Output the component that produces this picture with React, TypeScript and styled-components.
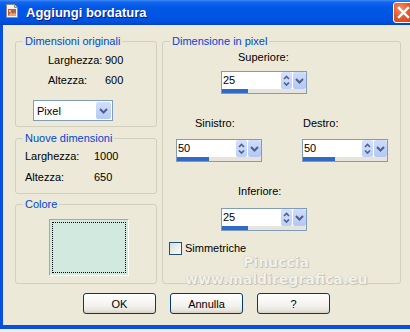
import React from 'react';
import styled, { createGlobalStyle } from 'styled-components';

const GlobalStyle = createGlobalStyle`
  html, body {
    margin: 0;
    padding: 0;
    background: #eeeeea;
  }
  body {
    font-family: "Liberation Sans", Arial, sans-serif;
    font-size: 11px;
    color: #000;
  }
`;

export default function App() {
    return (
        <Screen>
            <GlobalStyle />
            <Window>
                <TitleBar>
                    <AppIcon />
                    <Title>Aggiungi bordatura</Title>
                    <CloseButton>
                        <svg width="13" height="13" viewBox="0 0 13 13">
                            <path d="M2 2 L11 11 M11 2 L2 11" stroke="#fff" strokeWidth="2.4" strokeLinecap="square" />
                        </svg>
                    </CloseButton>
                </TitleBar>
                <Body>
                    <Columns>
                        <LeftColumn>
                            <Group $h={92}>
                                <Caption>Dimensioni originali</Caption>
                                <InfoRow $mt={6} $pl={32} $lw={57}>
                                    <span>Larghezza:</span><span>900</span>
                                </InfoRow>
                                <InfoRow $mt={7} $pl={32} $lw={57}>
                                    <span>Altezza:</span><span>600</span>
                                </InfoRow>
                                <Select>
                                    <SelectText>Pixel</SelectText>
                                    <SelectButton><ChevronDown /></SelectButton>
                                </Select>
                            </Group>
                            <Group $h={62}>
                                <Caption>Nuove dimensioni</Caption>
                                <InfoRow $mt={5} $pl={9} $lw={69}>
                                    <span>Larghezza:</span><span>1000</span>
                                </InfoRow>
                                <InfoRow $mt={8} $pl={9} $lw={69}>
                                    <span>Altezza:</span><span>650</span>
                                </InfoRow>
                            </Group>
                            <Group $h={86}>
                                <Caption>Colore</Caption>
                                <Swatch>
                                    <SwatchFocus />
                                </Swatch>
                            </Group>
                        </LeftColumn>
                        <Group $h={249}>
                            <Caption>Dimensione in pixel</Caption>
                            <FieldLabel $mt={3} $ml={75}>Superiore:</FieldLabel>
                            <Spinner value={25} fill={26} mt={7} ml={58} />
                            <PairRow>
                                <Field>
                                    <FieldLabel $mt={0} $ml={19}>Sinistro:</FieldLabel>
                                    <Spinner value={50} fill={32} mt={9} ml={0} />
                                </Field>
                                <Field>
                                    <FieldLabel $mt={0} $ml={1}>Destro:</FieldLabel>
                                    <Spinner value={50} fill={32} mt={9} ml={0} />
                                </Field>
                            </PairRow>
                            <FieldLabel $mt={23} $ml={75}>Inferiore:</FieldLabel>
                            <Spinner value={25} fill={26} mt={10} ml={58} />
                            <CheckRow>
                                <CheckBox />
                                <span>Simmetriche</span>
                            </CheckRow>
                        </Group>
                    </Columns>
                    <ButtonRow>
                        <PushButton>OK</PushButton>
                        <PushButton>Annulla</PushButton>
                        <PushButton>?</PushButton>
                    </ButtonRow>
                    <Watermark>
                        <div>Pinuccia</div>
                        <div>www.maldiregrafica.eu</div>
                    </Watermark>
                </Body>
            </Window>
        </Screen>
    );
}

function AppIcon() {
    return (
        <IconBox>
            <svg width="16" height="16" viewBox="0 0 16 16">
                <path d="M2.5 1.5 H10.5 L13.5 4.5 V14.5 H2.5 Z" fill="#f2f2f2" stroke="#8a8a8a" />
                <path d="M10.5 1.5 V4.5 H13.5" fill="#d8d8d8" stroke="#8a8a8a" />
                <rect x="4" y="6" width="8" height="7" fill="#b8603f" />
                <path d="M4 13 L7 9 L9 11 L10.5 9.5 L12 11 V13 Z" fill="#e8a07a" />
                <circle cx="6" cy="8" r="1" fill="#f6d2b8" />
            </svg>
        </IconBox>
    );
}

function ChevronDown() {
    return (
        <svg width="9" height="6" viewBox="0 0 9 6">
            <path d="M1 1 L4.5 4.5 L8 1" fill="none" stroke="#4d6185" strokeWidth="2" />
        </svg>
    );
}

function UpDown() {
    return (
        <svg width="9" height="15" viewBox="0 0 9 15">
            <path d="M2 6 L4.5 3.5 L7 6" fill="none" stroke="#4d6185" strokeWidth="1.6" />
            <path d="M2 9.5 L4.5 12 L7 9.5" fill="none" stroke="#4d6185" strokeWidth="1.6" />
        </svg>
    );
}

type SpinnerProps = {
    value: number;
    fill: number;
    mt: number;
    ml: number;
}

function Spinner({ value, fill, mt, ml }: SpinnerProps) {
    return (
        <SpinBox $mt={mt} $ml={ml}>
            <SpinTop>
                <SpinValue>{value}</SpinValue>
                <ArrowButton><UpDown /></ArrowButton>
                <DropButton><ChevronDown /></DropButton>
            </SpinTop>
            <Track>
                <TrackFill style={{ width: fill }} />
            </Track>
        </SpinBox>
    );
}

const Screen = styled.div`
    width: 410px;
    height: 332px;
    overflow: hidden;
    background: #eeeeea;
`

const Window = styled.div`
    width: 416px;
    display: flex;
    flex-direction: column;
`

const TitleBar = styled.div`
    height: 25px;
    box-sizing: border-box;
    display: flex;
    align-items: center;
    padding-left: 4px;
    background: linear-gradient(to bottom, #3e8df7 0%, #1466ee 8%, #0058e6 30%, #0054e3 70%, #0050dc 88%, #0043c4 100%);
`

const IconBox = styled.div`
    width: 16px;
    height: 16px;
    margin-top: -3px;
`

const Title = styled.div`
    margin-left: 6px;
    margin-top: -1px;
    font-family: "Liberation Sans", Arial, sans-serif;
    font-weight: bold;
    font-size: 13px;
    color: #fff;
    text-shadow: 1px 1px 0 #0a1a8a;
`

const CloseButton = styled.div`
    width: 21px;
    height: 21px;
    box-sizing: border-box;
    margin-left: auto;
    margin-right: 2px;
    margin-top: -1px;
    border: 1px solid #fff;
    border-radius: 3px;
    background: radial-gradient(circle at 35% 30%, #f4906c 0%, #e65a30 45%, #cc421c 100%);
    display: grid;
    place-items: center;
`

const Body = styled.div`
    position: relative;
    height: 304px;
    box-sizing: border-box;
    background: #ece9d8;
    border-left: 3px solid #0a4fe0;
    border-bottom: 4px solid #0a4fe0;
    padding: 10px 0 0 12px;
`

const Columns = styled.div`
    display: grid;
    grid-template-columns: 142px 239px;
    column-gap: 5px;
    height: 249px;
`

const LeftColumn = styled.div`
    display: flex;
    flex-direction: column;
    justify-content: space-between;
`

const Group = styled.fieldset<{ $h: number }>`
    margin: 0;
    padding: 0;
    min-width: 0;
    height: ${({ $h }) => $h}px;
    box-sizing: border-box;
    border: 1px solid #d0d0bf;
    border-radius: 3px;
    display: flex;
    flex-direction: column;
    align-items: flex-start;
`

const Caption = styled.legend`
    margin-left: 7px;
    padding: 0 2px;
    font-size: 11px;
    line-height: 13px;
    color: #0046d5;
`

const InfoRow = styled.div<{ $mt: number; $pl: number; $lw: number }>`
    display: flex;
    margin-top: ${({ $mt }) => $mt}px;
    padding-left: ${({ $pl }) => $pl}px;
    line-height: 13px;
    & > span:first-child {
        width: ${({ $lw }) => $lw}px;
    }
`

const Select = styled.div`
    margin: 13px 0 0 17px;
    width: 80px;
    height: 21px;
    box-sizing: border-box;
    border: 1px solid #7f9db9;
    background: #fff;
    display: flex;
    align-items: center;
`

const SelectText = styled.div`
    flex: 1;
    padding-left: 3px;
    font-size: 11px;
`

const SelectButton = styled.div`
    width: 15px;
    height: 17px;
    margin-right: 1px;
    border-radius: 2px;
    background: linear-gradient(to bottom, #d2defc, #b6caf6);
    display: grid;
    place-items: center;
`

const Swatch = styled.div`
    margin: 8px 0 0 33px;
    width: 80px;
    height: 57px;
    box-sizing: border-box;
    border: 1px solid;
    border-color: #aca899 #fff #fff #aca899;
    background: #d1e9df;
    padding: 2px;
    display: flex;
`

const SwatchFocus = styled.div`
    flex: 1;
    border: 1px dotted #000;
`

const FieldLabel = styled.div<{ $mt: number; $ml: number }>`
    margin-top: ${({ $mt }) => $mt}px;
    margin-left: ${({ $ml }) => $ml}px;
    line-height: 13px;
`

const PairRow = styled.div`
    display: flex;
    gap: 40px;
    margin: 23px 0 0 13px;
`

const Field = styled.div`
    display: flex;
    flex-direction: column;
    align-items: flex-start;
`

const SpinBox = styled.div<{ $mt: number; $ml: number }>`
    margin-top: ${({ $mt }) => $mt}px;
    margin-left: ${({ $ml }) => $ml}px;
    width: 86px;
    height: 23px;
    box-sizing: border-box;
    border: 1px solid #7f9db9;
    background: #fff;
    display: flex;
    flex-direction: column;
`

const SpinTop = styled.div`
    height: 17px;
    display: flex;
`

const SpinValue = styled.div`
    flex: 1;
    padding-left: 1px;
    line-height: 17px;
    font-size: 11px;
`

const ArrowButton = styled.div`
    width: 11px;
    border-radius: 2px;
    background: linear-gradient(to bottom, #d6e1fc, #bccff8);
    display: grid;
    place-items: center;
`

const DropButton = styled.div`
    width: 13px;
    margin-left: 1px;
    border-radius: 2px;
    background: linear-gradient(to bottom, #cfdcfc, #b3c7f5);
    display: grid;
    place-items: center;
`

const Track = styled.div`
    height: 4px;
    background: #e6e4dc;
    display: flex;
`

const TrackFill = styled.div`
    height: 100%;
    background: #316ac5;
`

const CheckRow = styled.div`
    display: flex;
    align-items: center;
    gap: 3px;
    margin: 11px 0 0 6px;
    line-height: 13px;
`

const CheckBox = styled.div`
    width: 13px;
    height: 13px;
    box-sizing: border-box;
    border: 1px solid #1c5180;
    background: linear-gradient(135deg, #dcdcd7, #fbfbf9);
`

const ButtonRow = styled.div`
    display: flex;
    gap: 14px;
    margin: 9px 0 0 68px;
`

const PushButton = styled.div`
    width: 73px;
    height: 21px;
    box-sizing: border-box;
    border: 1px solid #003c74;
    border-radius: 3px;
    background: linear-gradient(to bottom, #ffffff 0%, #f3f2ee 60%, #e6e3da 88%, #d6d0c5 100%);
    display: grid;
    place-items: center;
    font-size: 11px;
`

const Watermark = styled.div`
    position: absolute;
    left: 182px;
    top: 229px;
    width: 182px;
    text-align: center;
    font-family: "DejaVu Sans", sans-serif;
    font-weight: bold;
    font-size: 14px;
    line-height: 17px;
    color: #f3f1e9;
    text-shadow: 0 0 1px #b4b1a4, 1px 1px 0 #cac7b9;
    pointer-events: none;
`
